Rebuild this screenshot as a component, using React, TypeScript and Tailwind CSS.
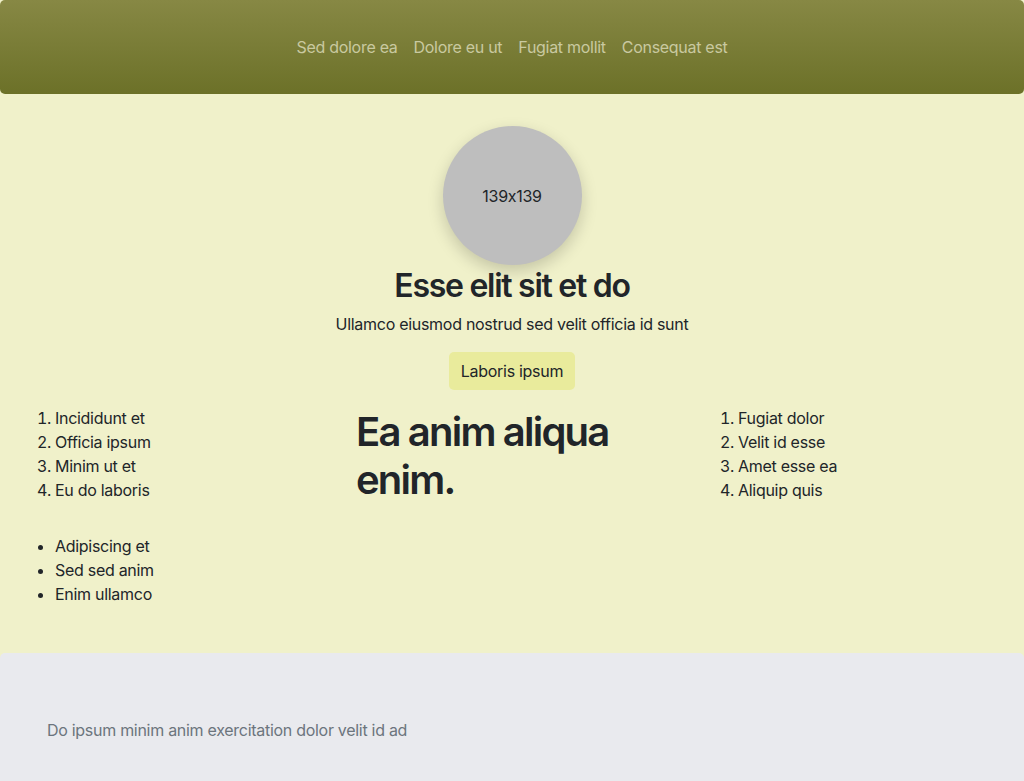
import React from "react";

export default function App() {
  return (
    <div
      className="min-h-[781px] bg-[#f0f1ca] text-[#212529] tracking-[-0.018em] [font-feature-settings:'calt'_0]"
      style={{ fontFamily: "Inter, 'Noto Sans', sans-serif" }}
    >
      <header className="h-[94px] rounded-[5px] bg-gradient-to-b from-[#878844] to-[#6c7128] flex items-center justify-center">
        <nav className="flex text-[16px] leading-6 text-[#c9c9a0]">
          <a className="px-2">Sed dolore ea</a>
          <a className="px-2">Dolore eu ut</a>
          <a className="px-2">Fugiat mollit</a>
          <a className="px-2">Consequat est</a>
        </nav>
      </header>
      <main className="bg-[#f0f1ca] pt-[32px] pb-[47px]">
        <div className="flex flex-col items-center">
          <div className="w-[139px] h-[139px] rounded-full bg-[#bebebe] flex items-center justify-center text-[16px] shadow-[0_6px_16px_rgba(0,0,0,0.18)]">
            139x139
          </div>
          <h2 className="mt-[2px] text-[32px] leading-[38px] font-semibold tracking-[-0.04em]">Esse elit sit et do</h2>
          <p className="mt-[7px] text-[16px] leading-6">Ullamco eiusmod nostrud sed velit officia id sunt</p>
          <button className="mt-[16px] h-[38px] px-3 rounded-[5px] bg-[#e9eb9c] text-[16px]">Laboris ipsum</button>
        </div>
        <div className="mt-[16px] grid grid-cols-[333px_350px_1fr] pl-[23px] text-[16px] leading-6">
          <div>
            <ol className="list-decimal pl-8">
              <li>Incididunt et</li>
              <li>Officia ipsum</li>
              <li>Minim ut et</li>
              <li>Eu do laboris</li>
            </ol>
            <ul className="list-disc pl-8 mt-8">
              <li>Adipiscing et</li>
              <li>Sed sed anim</li>
              <li>Enim ullamco</li>
            </ul>
          </div>
          <div>
            <h1 className="mt-[2px] text-[40px] leading-[48px] font-semibold tracking-[-0.045em] w-[300px]">Ea anim aliqua enim.</h1>
          </div>
          <div>
            <ol className="list-decimal pl-8">
              <li>Fugiat dolor</li>
              <li>Velit id esse</li>
              <li>Amet esse ea</li>
              <li>Aliquip quis</li>
            </ol>
          </div>
        </div>
      </main>
      <footer className="h-[128px] rounded-t-[5px] bg-[#e9eaee] pt-[65px] pl-[47px] text-[16px] leading-6 text-[#6c757d]">
        Do ipsum minim anim exercitation dolor velit id ad
      </footer>
    </div>
  );
}
